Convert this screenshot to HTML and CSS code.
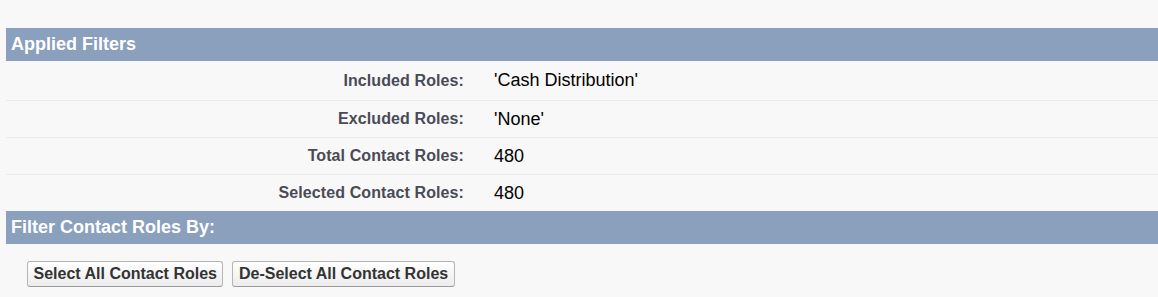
FILE: index.html
```html
<!DOCTYPE html>
<html>
<head>
<meta charset="utf-8">
<link rel="stylesheet" href="styles.css">
</head>
<body>
<div class="page">
  <div class="section-header">Applied Filters</div>
  <div class="filters">
    <div class="row first">
      <div class="label">Included Roles:</div>
      <div class="value">'Cash Distribution'</div>
    </div>
    <div class="row">
      <div class="label">Excluded Roles:</div>
      <div class="value">'None'</div>
    </div>
    <div class="row">
      <div class="label">Total Contact Roles:</div>
      <div class="value">480</div>
    </div>
    <div class="row last">
      <div class="label">Selected Contact Roles:</div>
      <div class="value">480</div>
    </div>
  </div>
  <div class="section-header">Filter Contact Roles By:</div>
  <div class="actions">
    <button class="btn" type="button">Select All Contact Roles</button>
    <button class="btn" type="button">De-Select All Contact Roles</button>
  </div>
</div>
</body>
</html>
```

FILE: styles.css
```css
html, body {
  margin: 0;
  padding: 0;
  background: #f8f8f8;
}

body {
  font-family: "Liberation Sans", Arial, sans-serif;
}

.page {
  padding: 28px 0 0 6px;
}

.section-header {
  height: 33px;
  background: #8aa0bd;
  color: #ffffff;
  font-size: 18px;
  font-weight: bold;
  display: flex;
  align-items: center;
  padding-left: 5px;
}

.filters {
  display: flex;
  flex-direction: column;
}

.row {
  display: grid;
  grid-template-columns: 460px 1fr;
  align-items: center;
  height: 36px;
  border-bottom: 1px solid #ebebeb;
}

.row.first {
  height: 39px;
}

.row.last {
  border-bottom: none;
}

.label {
  text-align: right;
  padding-right: 2px;
  font-size: 16px;
  font-weight: bold;
  color: #4a4a56;
  letter-spacing: 0.1px;
}

.value {
  padding-left: 28px;
  font-size: 18px;
  color: #000000;
}

.actions {
  display: flex;
  gap: 9px;
  padding: 17px 0 0 21px;
}

.btn {
  font-family: "Liberation Sans", Arial, sans-serif;
  font-size: 16px;
  font-weight: bold;
  color: #333333;
  line-height: 18px;
  padding: 3px 5.5px;
  border: 1px solid #b5b5b5;
  border-bottom-color: #9a9a9a;
  border-radius: 3px;
  background: linear-gradient(#ffffff, #ececec);
  margin: 0;
}
```
